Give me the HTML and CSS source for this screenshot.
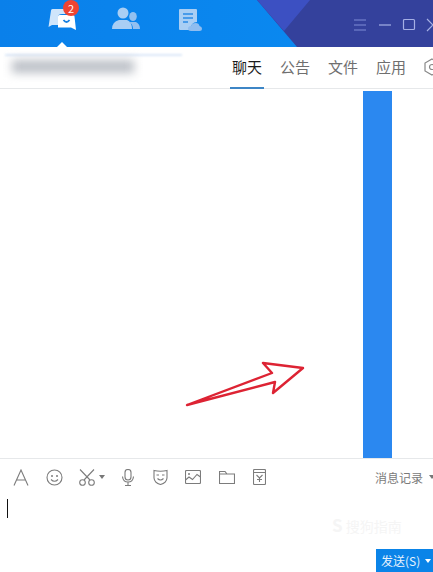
FILE: index.html
```html
<!DOCTYPE html>
<html lang="zh-CN">
<head>
    <meta charset="UTF-8">
    <meta name="viewport" content="width=device-width, initial-scale=1.0">
    <title>聊天</title>
    <link rel="stylesheet" href="styles.css">
</head>
<body>
    <div class="window">
        <header class="header">
            <svg class="header-decor" width="433" height="47" viewBox="0 0 433 47">
                <polygon points="257,0 433,0 433,47 297,47" fill="#34419c"/>
                <polygon points="257,0 310,0 284,31" fill="#3c50c2"/>
            </svg>
            <nav class="nav">
                <div class="nav-item nav-chat">
                    <svg width="28" height="24" viewBox="0 0 28 24">
                        <path d="M3 3.500 Q3 2 4.500 2 H22 Q23.500 2 23.500 3.500 V7 H14 Q10 7 10 10 V18 H4 L0.500 20 Z" fill="#cfe5fb"/>
                        <path d="M10 9.500 Q10 8 11.500 8 H25 Q26.500 8 26.500 9.500 L28 23 L23 20.500 H10 Z" fill="#fff"/>
                        <path d="M15.500 13 Q18.500 17 21.500 13" fill="none" stroke="#1a80e0" stroke-width="1.800"/>
                    </svg>
                    <span class="badge">2</span>
                </div>
                <div class="nav-item nav-contacts">
                    <svg width="28" height="23" viewBox="0 0 28 23">
                        <circle cx="11" cy="6" r="5.500" fill="#a9cef4"/>
                        <path d="M0 22 Q0 15 7 13 H15 Q20 15 20 22 Z" fill="#a9cef4"/>
                        <ellipse cx="21" cy="9.500" rx="3.800" ry="4.500" fill="#93c0f0"/>
                        <path d="M17 15 H24 Q28 17 28 22 H21 Q21 17 17 15 Z" fill="#93c0f0"/>
                    </svg>
                </div>
                <div class="nav-item nav-docs">
                    <svg width="23" height="23" viewBox="0 0 23 23">
                        <path d="M1 0 H17 Q18 0 18 1 V13 Q12 13 11 21 H1 Q0 21 0 20 V1 Q0 0 1 0 Z" fill="#a9cef4"/>
                        <path d="M4 5 H14 M4 9 H14 M4 13 H9" stroke="#2a8be6" stroke-width="1.500"/>
                        <path d="M12 22 Q9 22 9 19.500 Q9 17 12 17 Q13 14 16.500 14 Q20 14 20.500 17 Q23 17.500 23 19.500 Q23 22 20.500 22 Z" fill="#8fbdf0"/>
                    </svg>
                </div>
                <span class="nav-pointer"></span>
            </nav>
            <div class="window-controls">
                <svg width="86" height="14" viewBox="0 0 86 14">
                    <path d="M1 2 H13 M1 7 H13 M1 12 H13" stroke="#7f8dd6" stroke-width="1"/>
                    <path d="M26 7 H38" stroke="#a5afe4" stroke-width="1.200"/>
                    <rect x="50.500" y="1.500" width="11" height="10" rx="1" fill="none" stroke="#a5afe4" stroke-width="1.200"/>
                    <path d="M74 1 L80 7 L74 13" fill="none" stroke="#a5afe4" stroke-width="1.200"/>
                </svg>
            </div>
        </header>

        <div class="title-bar">
            <div class="chat-title">
                <span class="title-line"></span>
                <span class="title-blur"></span>
            </div>
            <div class="tabs">
                <span class="tab active">聊天</span>
                <span class="tab">公告</span>
                <span class="tab">文件</span>
                <span class="tab">应用</span>
                <svg class="tab-more" width="16" height="18" viewBox="0 0 16 18">
                    <path d="M8 1 L15 5 V13 L8 17 L1 13 V5 Z" fill="none" stroke="#888" stroke-width="1.200"/>
                    <circle cx="8" cy="9" r="2.500" fill="none" stroke="#888" stroke-width="1.200"/>
                </svg>
            </div>
        </div>

        <main class="messages">
            <div class="blue-column"></div>
            <svg class="arrow" width="122" height="50" viewBox="0 0 122 50">
                <path d="M2 46 L87 14 L78 4 L118 9 L88 34 L90 23 Z" fill="none" stroke="#dd2333" stroke-width="2.400" stroke-linejoin="round"/>
            </svg>
        </main>

        <div class="toolbar">
            <svg class="tool" width="16" height="17" viewBox="0 0 16 17"><path d="M1 16.500 L8 1 L15 16.500 M3.500 11 H12.500" fill="none" stroke="#7c7c7c" stroke-width="1.100"/></svg>
            <svg class="tool" width="17" height="17" viewBox="0 0 17 17"><circle cx="8.500" cy="8.500" r="7.500" fill="none" stroke="#7c7c7c" stroke-width="1.100"/><circle cx="6" cy="7" r="1" fill="#7c7c7c"/><circle cx="11" cy="7" r="1" fill="#7c7c7c"/><path d="M5 10.500 Q8.500 14 12 10.500" fill="none" stroke="#7c7c7c" stroke-width="1.100"/></svg>
            <div class="tool-scissors">
                <svg width="17" height="17" viewBox="0 0 17 17"><circle cx="3.500" cy="13.500" r="2.800" fill="none" stroke="#7c7c7c" stroke-width="1.100"/><circle cx="12.500" cy="13.500" r="2.800" fill="none" stroke="#7c7c7c" stroke-width="1.100"/><path d="M1 0.500 L11 11 M15 0.500 L5 11" fill="none" stroke="#7c7c7c" stroke-width="1.100"/></svg>
                <span class="caret"></span>
            </div>
            <svg class="tool" width="12" height="17" viewBox="0 0 12 17"><rect x="3" y="0.500" width="6" height="10.500" rx="3" fill="none" stroke="#7c7c7c" stroke-width="1.100"/><path d="M0.500 7.500 Q1 13 6 13 Q11 13 11.500 7.500 M6 13 V16 M3 16.500 H9" fill="none" stroke="#7c7c7c" stroke-width="1.100"/></svg>
            <svg class="tool" width="15" height="16" viewBox="0 0 15 16"><path d="M1 1.500 Q7.500 3 14 1.500 V9 Q13.500 14 7.500 15.500 Q1.500 14 1 9 Z" fill="none" stroke="#7c7c7c" stroke-width="1.100"/><path d="M3.500 6 H6 M9 6 H11.500 M4.500 9.500 Q7.500 12.500 10.500 9.500" fill="none" stroke="#7c7c7c" stroke-width="1.100"/></svg>
            <svg class="tool" width="16" height="14" viewBox="0 0 16 14"><rect x="0.500" y="0.500" width="15" height="13" rx="1" fill="none" stroke="#7c7c7c" stroke-width="1.100"/><circle cx="4" cy="4" r="1" fill="#7c7c7c"/><path d="M0.500 10 L4 7 L7.500 9.500 L12 4.500 L15.500 7" fill="none" stroke="#7c7c7c" stroke-width="1.100"/></svg>
            <svg class="tool" width="16" height="13" viewBox="0 0 16 13"><path d="M0.500 12.500 V0.500 H6 L8 3 H15.500 V12.500 Z M8 3 H0.500" fill="none" stroke="#7c7c7c" stroke-width="1.100"/></svg>
            <svg class="tool" width="13" height="16" viewBox="0 0 13 16"><rect x="0.500" y="0.500" width="12" height="15" rx="1" fill="none" stroke="#7c7c7c" stroke-width="1.100"/><path d="M0.500 3.500 H12.500 M3.500 6 L6.500 9 L9.500 6 M6.500 9 V13 M4 10.500 H9" fill="none" stroke="#7c7c7c" stroke-width="1.100"/></svg>
            <div class="history">消息记录<span class="caret"></span></div>
        </div>

        <div class="input-area">
            <span class="text-cursor"></span>
            <div class="watermark"><span class="watermark-logo">S</span> 搜狗指南</div>
            <div class="send-button">发送(S)<span class="caret caret-white"></span></div>
        </div>
    </div>
</body>
</html>
```

FILE: styles.css
```css
html, body {
    margin: 0;
    padding: 0;
    height: 100%;
    overflow: hidden;
    background-color: #fff;
}
.window {
    width: 433px;
    height: 572px;
    display: flex;
    flex-direction: column;
    overflow: hidden;
    font-family: "Noto Sans CJK SC", "Noto Sans", sans-serif;
}

/* top blue bar */
.header {
    position: relative;
    height: 47px;
    flex-shrink: 0;
    display: flex;
    overflow: hidden;
    background: linear-gradient(90deg, #0a80ea, #0a8cf2);
}
.header-decor {
    position: absolute;
    top: 0;
    left: 0;
}
.nav {
    position: relative;
    width: 353px;
    flex-shrink: 0;
    box-sizing: border-box;
    padding: 7px 0 0 48px;
    display: flex;
    align-items: flex-start;
}
.nav-item {
    position: relative;
    display: flex;
}
.nav-contacts {
    margin-left: 36px;
}
.nav-docs {
    margin: 2px 0 0 39px;
}
.badge {
    position: absolute;
    top: -7px;
    left: 15px;
    width: 16px;
    height: 16px;
    border-radius: 50%;
    background-color: #ee4433;
    color: #fff;
    font-size: 11px;
    line-height: 16px;
    text-align: center;
}
.nav-pointer {
    position: absolute;
    left: 57px;
    bottom: 0;
    border-left: 5px solid transparent;
    border-right: 5px solid transparent;
    border-bottom: 5px solid #fff;
}
.window-controls {
    position: relative;
    flex-shrink: 0;
    padding-top: 13px;
}

/* title and tabs */
.title-bar {
    height: 42px;
    box-sizing: border-box;
    flex-shrink: 0;
    display: flex;
    border-bottom: 1px solid #e6e8ea;
}
.chat-title {
    position: relative;
    width: 230px;
    flex-shrink: 0;
}
.title-line {
    position: absolute;
    top: 7px;
    left: 5px;
    width: 177px;
    height: 2px;
    background-color: #dbe8f8;
    filter: blur(1px);
}
.title-blur {
    position: absolute;
    top: 13px;
    left: 12px;
    width: 122px;
    height: 13px;
    background-color: #bcc0c7;
    filter: blur(5px);
}
.tabs {
    display: flex;
    gap: 14px;
    flex-shrink: 0;
}
.tab {
    height: 42px;
    box-sizing: border-box;
    padding: 9px 2px 0;
    font-size: 15px;
    line-height: 22px;
    color: #6f6f6f;
}
.tab.active {
    color: #1b1b1b;
    border-bottom: 2px solid #3d86c6;
}
.tab-more {
    margin: 11px 0 0 2px;
    flex-shrink: 0;
}

/* message area */
.messages {
    position: relative;
    flex: 1;
    min-height: 0;
    display: flex;
    justify-content: flex-end;
    padding: 2px 41px 0 0;
    border-bottom: 1px solid #e6e8ea;
}
.blue-column {
    width: 29px;
    background-color: #2b88f0;
}
.arrow {
    position: absolute;
    top: 270px;
    left: 185px;
}

/* toolbar */
.toolbar {
    height: 36px;
    flex-shrink: 0;
    display: flex;
    align-items: center;
}
.tool {
    flex-shrink: 0;
}
.toolbar > :nth-child(1) { margin-left: 13px; }
.toolbar > :nth-child(2) { margin-left: 17px; }
.toolbar > :nth-child(4) { margin-left: 17px; }
.toolbar > :nth-child(5) { margin-left: 19px; }
.toolbar > :nth-child(6) { margin-left: 17px; }
.toolbar > :nth-child(7) { margin-left: 18px; }
.toolbar > :nth-child(8) { margin-left: 18px; }
.tool-scissors {
    margin-left: 16px;
    display: flex;
    align-items: center;
    gap: 3px;
}
.caret {
    display: inline-block;
    border-left: 3px solid transparent;
    border-right: 3px solid transparent;
    border-top: 4px solid #777;
}
.history {
    margin-left: 109px;
    flex-shrink: 0;
    display: flex;
    align-items: center;
    gap: 6px;
    font-size: 12px;
    color: #7a7a7a;
    white-space: nowrap;
}

/* input */
.input-area {
    position: relative;
    height: 77px;
    flex-shrink: 0;
}
.text-cursor {
    display: block;
    width: 1px;
    height: 19px;
    margin: 4px 0 0 7px;
    background-color: #111;
}
.watermark {
    position: absolute;
    top: 17px;
    left: 332px;
    font-size: 14px;
    color: #f5f5f5;
    white-space: nowrap;
}
.watermark-logo {
    font-weight: bold;
    font-size: 17px;
}
.send-button {
    position: absolute;
    right: 0;
    bottom: 0;
    width: 57px;
    height: 23px;
    box-sizing: border-box;
    padding-left: 5px;
    display: flex;
    align-items: center;
    gap: 5px;
    background-color: #0a84e8;
    color: #e6f2fd;
    font-size: 12px;
    white-space: nowrap;
}
.caret-white {
    border-top-color: #fff;
}
```
